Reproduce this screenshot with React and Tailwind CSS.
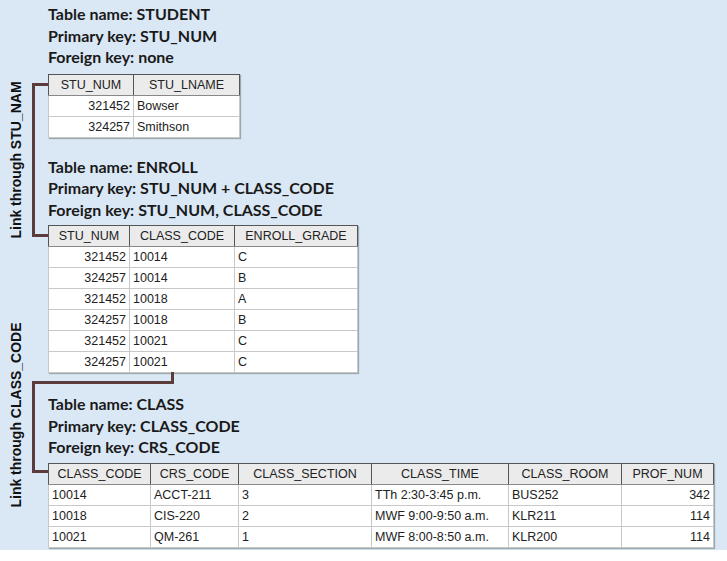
import React from "react"

const Heads = ({ lines, className = "" }) => (
  <div className={"font-[Lato,sans-serif] font-bold text-[16px] leading-[21.5px] text-[#1a1a1a] " + className}>
    {lines.map((l) => <div key={l}>{l}</div>)}
  </div>
)

function Table({ cols, rows }) {
  return (
    <table className="border-collapse bg-white font-[Liberation_Sans,Arial,sans-serif] text-[12.5px] leading-[14px] text-[#222] shadow-[1px_1px_1px_#9aa]">
      <thead>
        <tr>
          {cols.map((c) => (
            <th key={c.h} style={{ width: c.w }} className="h-[21px] border border-[#555] border-b-[#888] bg-[#ebebeb] px-1 py-0 text-center font-normal">{c.h}</th>
          ))}
        </tr>
      </thead>
      <tbody>
        {rows.map((r, i) => (
          <tr key={i}>
            {r.map((v, j) => (
              <td key={j} className={"h-[21px] border border-[#c8c8c8] px-[3px] py-0 " + (cols[j].right ? "text-right" : "text-left")}>{v}</td>
            ))}
          </tr>
        ))}
      </tbody>
    </table>
  )
}

export default function App() {
  return (
    <div className="relative w-[727px] h-[561px] bg-[#dae8f6] overflow-hidden">
      {/* connectors */}
      <div className="absolute left-[32px] top-[83px] w-[3px] h-[154px] bg-[#5b3b3b]" />
      <div className="absolute left-[32px] top-[83px] w-[16px] h-[3px] bg-[#5b3b3b]" />
      <div className="absolute left-[32px] top-[234px] w-[16px] h-[3px] bg-[#5b3b3b]" />
      <div className="absolute left-[171px] top-[372px] w-[3px] h-[12px] bg-[#5b3b3b]" />
      <div className="absolute left-[32px] top-[381px] w-[142px] h-[3px] bg-[#5b3b3b]" />
      <div className="absolute left-[32px] top-[381px] w-[3px] h-[92px] bg-[#5b3b3b]" />
      <div className="absolute left-[32px] top-[470px] w-[16px] h-[3px] bg-[#5b3b3b]" />
      <div className="absolute left-[16px] top-[160px] -translate-x-1/2 -translate-y-1/2 -rotate-90 whitespace-nowrap font-[Liberation_Sans,Arial,sans-serif] font-bold text-[14px] text-[#111]">Link through STU_NAM</div>
      <div className="absolute left-[16px] top-[415px] -translate-x-1/2 -translate-y-1/2 -rotate-90 whitespace-nowrap font-[Liberation_Sans,Arial,sans-serif] font-bold text-[14px] text-[#111]">Link through CLASS_CODE</div>
      <div className="absolute left-0 right-0 bottom-0 h-[11px] bg-white" />

      <div className="flex flex-col pl-[48px] pt-[3px]">
        <Heads lines={["Table name: STUDENT", "Primary key: STU_NUM", "Foreign key: none"]} />
        <div className="mt-[6px]">
          <Table
            cols={[{ h: "STU_NUM", w: 85, right: true }, { h: "STU_LNAME", w: 106 }]}
            rows={[["321452", "Bowser"], ["324257", "Smithson"]]}
          />
        </div>
        <Heads className="mt-[18px]" lines={["Table name: ENROLL", "Primary key: STU_NUM + CLASS_CODE", "Foreign key:  STU_NUM, CLASS_CODE"]} />
        <div className="mt-[5px]">
          <Table
            cols={[{ h: "STU_NUM", w: 81, right: true }, { h: "CLASS_CODE", w: 105 }, { h: "ENROLL_GRADE", w: 123 }]}
            rows={[
              ["321452", "10014", "C"], ["324257", "10014", "B"], ["321452", "10018", "A"],
              ["324257", "10018", "B"], ["321452", "10021", "C"], ["324257", "10021", "C"],
            ]}
          />
        </div>
        <Heads className="mt-[20px]" lines={["Table name: CLASS", "Primary key: CLASS_CODE", "Foreign key: CRS_CODE"]} />
        <div className="mt-[5px]">
          <Table
            cols={[{ h: "CLASS_CODE", w: 102 }, { h: "CRS_CODE", w: 88 }, { h: "CLASS_SECTION", w: 133 }, { h: "CLASS_TIME", w: 137 }, { h: "CLASS_ROOM", w: 113 }, { h: "PROF_NUM", w: 92, right: true }]}
            rows={[
              ["10014", "ACCT-211", "3", "TTh 2:30-3:45 p.m.", "BUS252", "342"],
              ["10018", "CIS-220", "2", "MWF 9:00-9:50 a.m.", "KLR211", "114"],
              ["10021", "QM-261", "1", "MWF 8:00-8:50 a.m.", "KLR200", "114"],
            ]}
          />
        </div>
      </div>
    </div>
  )
}
